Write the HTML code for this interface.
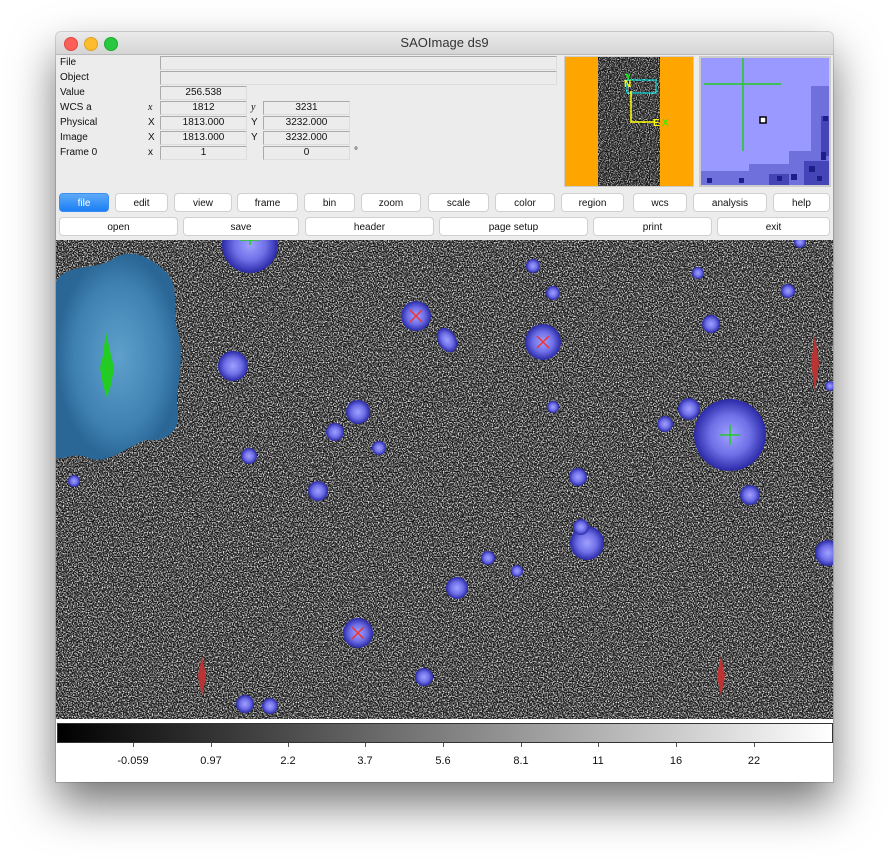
<!DOCTYPE html>
<html><head><meta charset="utf-8"><style>
html,body{margin:0;padding:0;background:#fff;width:889px;height:862px;overflow:hidden;font-family:"Liberation Sans",sans-serif}
.win{position:absolute;left:56px;top:32px;width:777px;height:750px;background:#ececec;box-shadow:0 22px 45px rgba(0,0,0,.55),0 0 0 1px rgba(0,0,0,.15);border-radius:5px 5px 0 0;overflow:hidden}
.title{position:absolute;left:0;top:0;width:777px;height:22px;background:linear-gradient(#ebebeb,#d5d5d5);border-bottom:1px solid #b9b9b9;text-align:center;font-size:13px;line-height:22px;color:#333}
.dot{position:absolute;top:5px;width:12px;height:12px;border-radius:50%}
.a{position:absolute;font-size:10px;color:#111;line-height:12px}
.f{position:absolute;height:12px;background:#ececec;border:1px solid #aaa;border-right-color:#ddd;border-bottom-color:#ddd;font-size:10px;text-align:center;line-height:12px;color:#111}
.b{position:absolute;height:19px;background:#fff;border:1px solid #d0d0d0;border-radius:4px;font-size:10px;text-align:center;line-height:19px;color:#111;box-sizing:border-box}
.lb{position:absolute;top:755px;font-size:11px;color:#111;transform:translateX(-50%)}
.tk{position:absolute;top:743px;width:1px;height:4px;background:#555}
</style></head><body>
<div class="win">
<div class="title">SAOImage ds9
<div class="dot" style="left:8px;background:#fc5f57;border:.5px solid #de4840"></div>
<div class="dot" style="left:28px;background:#fdbc2e;border:.5px solid #dea123"></div>
<div class="dot" style="left:48px;background:#29c840;border:.5px solid #1aab29"></div>
</div>
</div>
<div class="a" style="left:60px;top:57px">File</div>
<div class="a" style="left:60px;top:72px">Object</div>
<div class="a" style="left:60px;top:87px">Value</div>
<div class="a" style="left:60px;top:102px">WCS a</div>
<div class="a" style="left:60px;top:117px">Physical</div>
<div class="a" style="left:60px;top:132px">Image</div>
<div class="a" style="left:60px;top:147px">Frame 0</div>
<div class="a" style="left:148px;top:102px;font-family:'Liberation Serif',serif;font-style:italic">x</div>
<div class="a" style="left:148px;top:117px">X</div>
<div class="a" style="left:148px;top:132px">X</div>
<div class="a" style="left:148px;top:147px">x</div>
<div class="a" style="left:251px;top:102px;font-family:'Liberation Serif',serif;font-style:italic">y</div>
<div class="a" style="left:251px;top:117px">Y</div>
<div class="a" style="left:251px;top:132px">Y</div>
<div class="a" style="left:354px;top:146px">°</div>
<div class="f" style="left:160px;top:56px;width:395px"></div>
<div class="f" style="left:160px;top:71px;width:395px"></div>
<div class="f" style="left:160px;top:86px;width:85px">256.538</div>
<div class="f" style="left:160px;top:101px;width:85px">1812</div>
<div class="f" style="left:263px;top:101px;width:85px">3231</div>
<div class="f" style="left:160px;top:116px;width:85px">1813.000</div>
<div class="f" style="left:263px;top:116px;width:85px">3232.000</div>
<div class="f" style="left:160px;top:131px;width:85px">1813.000</div>
<div class="f" style="left:263px;top:131px;width:85px">3232.000</div>
<div class="f" style="left:160px;top:146px;width:85px">1</div>
<div class="f" style="left:263px;top:146px;width:85px">0</div>
<svg style="position:absolute;left:564px;top:56px" width="130" height="131">
<defs><filter id="nz2" x="0" y="0" width="100%" height="100%"><feTurbulence type="fractalNoise" baseFrequency="0.9" numOctaves="1" seed="3"/><feColorMatrix values="0 0 0 0 .8 0 0 0 0 .8 0 0 0 0 .82 3 0 0 0 -1.3"/></filter></defs>
<rect x="0" y="0" width="130" height="131" fill="#ccc"/>
<rect x="1" y="1" width="128" height="129" fill="#ffa500"/>
<rect x="34" y="1" width="62" height="129" fill="#151515"/>
<rect x="34" y="1" width="62" height="129" filter="url(#nz2)"/>
<rect x="63" y="24" width="29" height="13" fill="none" stroke="#0ff" stroke-width="1"/>
<path d="M67 35V66H90" stroke="#ff0" stroke-width="1.5" fill="none"/>
<text x="60" y="31" fill="#ff0" font-size="10" font-weight="bold">N</text>
<text x="61" y="24" fill="#0f0" font-size="9" font-weight="bold">Y</text>
<text x="89" y="70" fill="#ff0" font-size="10" font-weight="bold">E</text>
<text x="98" y="70" fill="#0f0" font-size="10">X</text>
</svg>
<svg style="position:absolute;left:699px;top:56px" width="132" height="131">
<rect width="132" height="131" fill="#ccc"/>
<rect x="2" y="2" width="128" height="127" fill="#9999ff"/>
<g fill="#7070dd"><rect x="90" y="95" width="40" height="34"/><rect x="50" y="108" width="40" height="21"/><rect x="112" y="30" width="18" height="65"/><rect x="2" y="115" width="48" height="14"/></g>
<g fill="#4545b8"><rect x="105" y="105" width="25" height="24"/><rect x="70" y="118" width="20" height="11"/><rect x="122" y="60" width="8" height="40"/></g>
<g fill="#1e1e8a"><rect x="110" y="110" width="6" height="6"/><rect x="122" y="96" width="5" height="8"/><rect x="92" y="118" width="6" height="6"/><rect x="40" y="122" width="5" height="5"/><rect x="124" y="60" width="5" height="5"/><rect x="78" y="120" width="5" height="5"/><rect x="8" y="122" width="5" height="5"/><rect x="118" y="120" width="5" height="5"/></g>
<path d="M5 28H82M44 2V95" stroke="#2c2" stroke-width="1.5"/>
<rect x="61" y="61" width="6" height="6" fill="#fff" stroke="#000" stroke-width="1.5"/>
</svg>
<div class="b" style="left:59px;top:193px;width:50px;background:linear-gradient(#5eaaf8,#1a7ef4);color:#fff;border-color:#3b8ef0">file</div>
<div class="b" style="left:115px;top:193px;width:53px">edit</div>
<div class="b" style="left:174px;top:193px;width:58px">view</div>
<div class="b" style="left:237px;top:193px;width:61px">frame</div>
<div class="b" style="left:304px;top:193px;width:51px">bin</div>
<div class="b" style="left:361px;top:193px;width:60px">zoom</div>
<div class="b" style="left:428px;top:193px;width:61px">scale</div>
<div class="b" style="left:495px;top:193px;width:60px">color</div>
<div class="b" style="left:561px;top:193px;width:63px">region</div>
<div class="b" style="left:633px;top:193px;width:54px">wcs</div>
<div class="b" style="left:693px;top:193px;width:74px">analysis</div>
<div class="b" style="left:773px;top:193px;width:57px">help</div>
<div class="b" style="left:59px;top:217px;width:119px">open</div>
<div class="b" style="left:183px;top:217px;width:116px">save</div>
<div class="b" style="left:305px;top:217px;width:129px">header</div>
<div class="b" style="left:439px;top:217px;width:149px">page setup</div>
<div class="b" style="left:593px;top:217px;width:119px">print</div>
<div class="b" style="left:717px;top:217px;width:113px">exit</div>
<svg style="position:absolute;left:56px;top:240px" width="777" height="479">
<defs>
<filter id="nz" x="0" y="0" width="100%" height="100%"><feTurbulence type="fractalNoise" baseFrequency="0.8" numOctaves="1" seed="7"/><feColorMatrix values="0 0 0 0 .9 0 0 0 0 .9 0 0 0 0 .9 3.2 0 0 0 -1.35"/></filter>
<radialGradient id="st"><stop offset="0" stop-color="#a0a0ff"/><stop offset=".55" stop-color="#7070e8"/><stop offset="1" stop-color="#2a2aa8"/></radialGradient>
<radialGradient id="bl"><stop offset="0" stop-color="#5fa0cc"/><stop offset=".7" stop-color="#3f82b2"/><stop offset="1" stop-color="#2a6696"/></radialGradient>
</defs>
<rect width="777" height="479" fill="#151515"/>
<rect width="777" height="479" filter="url(#nz)"/>
<path d="M0 40 C10 20 40 30 60 15 C80 5 100 20 110 30 C125 45 115 70 122 90 C130 120 118 150 122 170 C124 190 110 200 90 198 C70 205 50 225 30 215 C15 210 5 220 0 215Z" fill="url(#bl)" transform="translate(0,2)"/>
<path d="M50 92 L55 115 L58 128 L55 145 L51 158 L47 145 L44 128 L47 115Z" fill="#2c2"/>
<g fill="url(#st)">
<circle cx="194" cy="5" r="28"/><circle cx="360" cy="76" r="15"/><ellipse cx="391" cy="100" rx="9" ry="13" transform="rotate(-30 391 100)"/><circle cx="487" cy="102" r="18"/><circle cx="177" cy="126" r="15"/><circle cx="302" cy="172" r="12"/><circle cx="279" cy="192" r="9"/><circle cx="323" cy="208" r="7"/><circle cx="193" cy="216" r="8"/><circle cx="262" cy="251" r="10"/><circle cx="18" cy="241" r="6"/><circle cx="477" cy="26" r="7"/><circle cx="497" cy="53" r="7"/><circle cx="642" cy="33" r="6"/><circle cx="655" cy="84" r="9"/><circle cx="732" cy="51" r="7"/><circle cx="744" cy="2" r="6"/><circle cx="497" cy="167" r="6"/><circle cx="633" cy="169" r="11"/><circle cx="609" cy="184" r="8"/><circle cx="674" cy="195" r="36"/><circle cx="774" cy="146" r="5"/><circle cx="694" cy="255" r="10"/><circle cx="522" cy="237" r="9"/><circle cx="531" cy="303" r="17"/><circle cx="525" cy="287" r="8"/><circle cx="772" cy="313" r="13"/><circle cx="432" cy="318" r="7"/><circle cx="461" cy="331" r="6"/><circle cx="401" cy="348" r="11"/><circle cx="302" cy="393" r="15"/><circle cx="368" cy="437" r="9"/><circle cx="189" cy="464" r="9"/><circle cx="214" cy="466" r="8"/>
</g>
<g stroke="#e33" stroke-width="1.5"><path d="M354 70l12 12M366 70l-12 12M481 96l12 12M493 96l-12 12M296 387l12 12M308 387l-12 12"/></g>
<g stroke="#2c2" stroke-width="1.5"><path d="M664 195h20M674 185v20M184 0h20M194 -5v10"/></g>
<g fill="#b33"><path d="M759 95l4 28-4 28-4-28z"/><path d="M146 416l4 20-4 20-4-20z"/><path d="M665 416l4 20-4 20-4-20z"/></g>
</svg>
<div style="position:absolute;left:56px;top:719px;width:777px;height:63px;background:#fff"></div>
<div style="position:absolute;left:57px;top:723px;width:774px;height:18px;border:1px solid #333;background:linear-gradient(90deg,#000,#fff)"></div>
<div class="tk" style="left:133px"></div><div class="tk" style="left:211px"></div><div class="tk" style="left:288px"></div><div class="tk" style="left:365px"></div><div class="tk" style="left:443px"></div><div class="tk" style="left:521px"></div><div class="tk" style="left:598px"></div><div class="tk" style="left:676px"></div><div class="tk" style="left:754px"></div>
<div class="lb" style="left:133px">-0.059</div><div class="lb" style="left:211px">0.97</div><div class="lb" style="left:288px">2.2</div><div class="lb" style="left:365px">3.7</div><div class="lb" style="left:443px">5.6</div><div class="lb" style="left:521px">8.1</div><div class="lb" style="left:598px">11</div><div class="lb" style="left:676px">16</div><div class="lb" style="left:754px">22</div>
</body></html>
